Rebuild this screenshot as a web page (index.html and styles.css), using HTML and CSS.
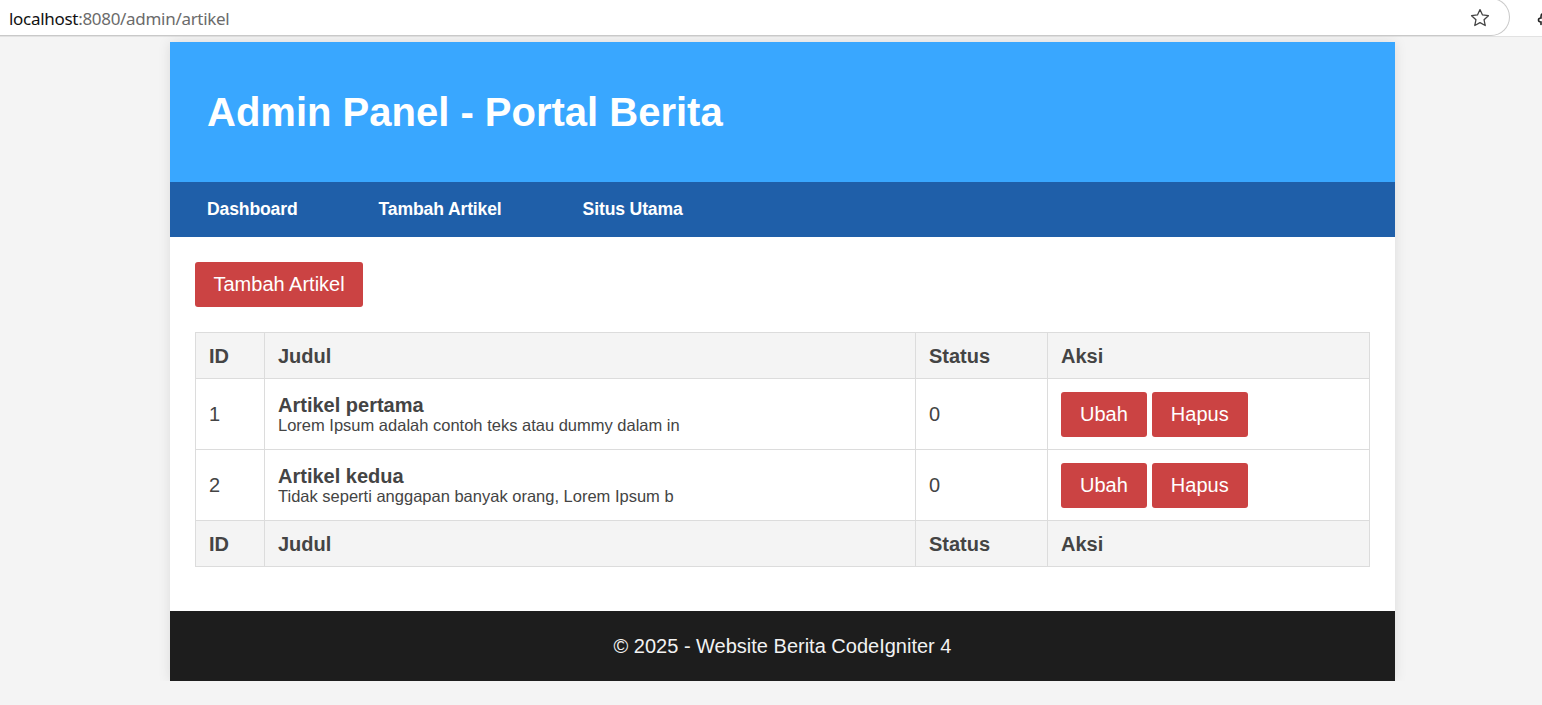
FILE: index.html
```html
<!DOCTYPE html>
<html lang="id">
<head>
<meta charset="utf-8">
<title>Admin Panel - Portal Berita</title>
<link rel="stylesheet" href="styles.css">
</head>
<body>
<div class="toolbar">
  <div class="omnibox">
    <span class="url"><span class="host">localhost</span><span class="path">:8080/admin/artikel</span></span>
    <svg class="star" width="22" height="22" viewBox="0 0 24 24"><path d="M12 2.8l2.75 5.9 6.45.75-4.8 4.4 1.3 6.35L12 17l-5.7 3.2 1.3-6.35-4.8-4.4 6.45-.75z" fill="none" stroke="#444" stroke-width="1.4" stroke-linejoin="round"/></svg>
  </div>
  <div class="ext">
    <svg width="14" height="20" viewBox="0 0 14 20"><path d="M8 4.5 C5.5 4.5 5 6 5 7.5 L5 9 C3.5 9 2.5 9.5 2.5 11 C2.5 12.5 3.5 13 5 13 L5 15.5" fill="none" stroke="#222" stroke-width="1.6" stroke-linecap="round"/></svg>
  </div>
</div>

<div class="container">
  <header class="site-header">
    <h1 class="site-title">Admin Panel - Portal Berita</h1>
  </header>
  <nav class="site-nav">
    <a class="nav-link" href="#">Dashboard</a>
    <a class="nav-link" href="#">Tambah Artikel</a>
    <a class="nav-link" href="#">Situs Utama</a>
  </nav>
  <main class="content">
    <a class="btn btn-add" href="#">Tambah Artikel</a>
    <table class="table">
      <colgroup>
        <col class="col-id">
        <col class="col-judul">
        <col class="col-status">
        <col class="col-aksi">
      </colgroup>
      <thead>
        <tr><th>ID</th><th>Judul</th><th>Status</th><th>Aksi</th></tr>
      </thead>
      <tbody>
        <tr>
          <td>1</td>
          <td><b class="art-title">Artikel pertama</b><p class="art-excerpt">Lorem Ipsum adalah contoh teks atau dummy dalam in</p></td>
          <td>0</td>
          <td><div class="actions"><a class="btn" href="#">Ubah</a><a class="btn" href="#">Hapus</a></div></td>
        </tr>
        <tr>
          <td>2</td>
          <td><b class="art-title">Artikel kedua</b><p class="art-excerpt">Tidak seperti anggapan banyak orang, Lorem Ipsum b</p></td>
          <td>0</td>
          <td><div class="actions"><a class="btn" href="#">Ubah</a><a class="btn" href="#">Hapus</a></div></td>
        </tr>
      </tbody>
      <tfoot>
        <tr><th>ID</th><th>Judul</th><th>Status</th><th>Aksi</th></tr>
      </tfoot>
    </table>
  </main>
  <footer class="site-footer">© 2025 - Website Berita CodeIgniter 4</footer>
</div>
</body>
</html>
```

FILE: styles.css
```css
* { box-sizing: border-box; }

html, body {
  margin: 0;
  padding: 0;
  background: #f4f4f4;
  font-family: "Liberation Sans", Arial, sans-serif;
  color: #444;
}

.toolbar {
  display: flex;
  height: 37px;
  background: #fff;
  border-bottom: 1px solid #e2e2e2;
  overflow: hidden;
}

.omnibox {
  width: 1510px;
  flex: none;
  height: 38px;
  margin-top: -2px;
  display: flex;
  align-items: center;
  justify-content: space-between;
  padding: 0 18px 0 9px;
  background: #fff;
  border: 1px solid #c9c9c9;
  border-left: none;
  border-radius: 0 19px 19px 0;
}

.url {
  font-family: "Noto Sans", "Open Sans", sans-serif;
  font-size: 17px;
  letter-spacing: -0.3px;
  padding-top: 2px;
}

.host { color: #111; }
.path { color: #6b6b6b; }

.star { display: block; margin-top: 2px; }

.ext {
  flex: 1;
  display: flex;
  align-items: center;
  padding-left: 26px;
  padding-top: 2px;
}
.ext svg { display: block; }

.container {
  width: 1225px;
  margin: 5px 0 0 170px;
  background: #fff;
  box-shadow: 0 0 12px rgba(0, 0, 0, 0.1);
}

.site-header {
  height: 140px;
  background: #39a7ff;
  display: flex;
  align-items: center;
  padding: 0 37px;
}

.site-title {
  margin: 0;
  color: #fff;
  font-size: 40px;
  font-weight: bold;
  line-height: 46px;
}

.site-nav {
  height: 55px;
  background: #1f5fa9;
  display: flex;
  align-items: center;
  gap: 81px;
  padding: 0 37px;
}

.nav-link {
  color: #fff;
  font-weight: bold;
  font-size: 17.6px;
  text-decoration: none;
  letter-spacing: -0.15px;
}

.content {
  padding: 25px 25px 44px;
}

.btn {
  display: inline-flex;
  align-items: center;
  justify-content: center;
  height: 45px;
  padding: 0 19px;
  background: #cb4343;
  color: #fff;
  font-size: 20px;
  text-decoration: none;
  border-radius: 3px;
}

.btn-add {
  padding: 0 18.5px;
  margin-bottom: 25px;
}

.table {
  width: 100%;
  border-collapse: collapse;
  table-layout: fixed;
}

.col-id { width: 69px; }
.col-status { width: 132px; }
.col-aksi { width: 322px; }

.table th,
.table td {
  border: 1px solid #dcdcdc;
  text-align: left;
  vertical-align: middle;
  color: #444;
}

.table th {
  background: #f4f4f4;
  font-size: 20px;
  font-weight: bold;
  line-height: 23px;
  padding: 12px 13px 10px;
}

.table td {
  font-size: 20px;
  line-height: 23px;
  padding: 13px 13px 12px;
}

.art-title {
  display: block;
  font-size: 20px;
  line-height: 21px;
}

.art-excerpt {
  margin: 0;
  font-size: 16.5px;
  line-height: 18px;
}

.actions {
  display: flex;
  gap: 5px;
}

.site-footer {
  height: 70px;
  background: #1d1d1d;
  color: #f2f2f2;
  font-size: 20px;
  display: flex;
  align-items: center;
  justify-content: center;
}
```
